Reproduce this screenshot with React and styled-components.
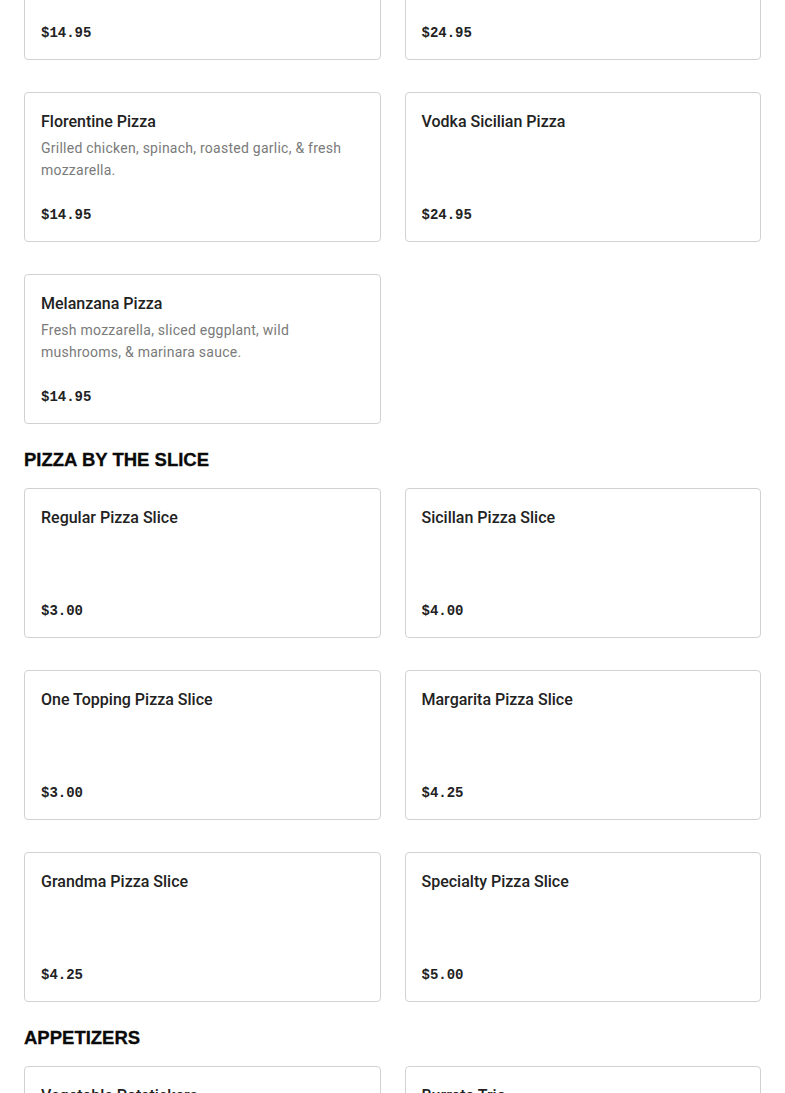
import React from "react";
import styled, { createGlobalStyle } from "styled-components";

const GlobalStyle = createGlobalStyle`
    html, body {
        margin: 0;
        padding: 0;
        background: #fff;
        overflow: hidden;
    }
    body {
        font-family: "Liberation Sans", Arial, sans-serif;
        color: #222;
    }
`

const Page = styled.div`
    width: 100%;
    padding: 0 24px;
    box-sizing: border-box;
    margin-top: -90px;
`

const Section = styled.section`
    display: flex;
    flex-direction: column;
`

const Heading = styled.h2`
    margin: 24px 0 16px 0;
    font-family: "Liberation Sans", Arial, sans-serif;
    font-size: 18.5px;
    line-height: 24px;
    font-weight: 900;
    color: #0a0a0a;
    -webkit-text-stroke: 0.3px #0a0a0a;
`

const Grid = styled.div`
    display: grid;
    grid-template-columns: 1fr 1fr;
    column-gap: 24px;
    row-gap: 32px;
`

const Card = styled.div`
    display: flex;
    flex-direction: column;
    height: 150px;
    box-sizing: border-box;
    padding: 17px 16px 14px 16px;
    border: 1px solid #d2d2d2;
    border-radius: 4px;
    background: #fff;
    .title{
        font-family: Roboto, "Liberation Sans", sans-serif;
        font-weight: 500;
        font-size: 16px;
        line-height: 24px;
        color: #222;
    }
    .desc{
        margin-top: 3px;
        font-family: Roboto, "Liberation Sans", sans-serif;
        font-size: 14px;
        letter-spacing: 0.25px;
        line-height: 22px;
        color: #7a7a7a;
        max-width: 305px;
    }
    .price{
        margin-top: auto;
        font-family: "Liberation Mono", "Courier New", monospace;
        font-weight: 700;
        font-size: 14px;
        line-height: 24px;
        color: #222;
    }
`

const menu = [
    {
        name: null,
        items: [
            { title: "Chicken Pesto Pizza", desc: "Grilled chicken, basil pesto, & fresh mozzarella.", price: "$14.95" },
            { title: "Grandma Sicilian Pizza", desc: "", price: "$24.95" },
            { title: "Florentine Pizza", desc: "Grilled chicken, spinach, roasted garlic, & fresh mozzarella.", price: "$14.95" },
            { title: "Vodka Sicilian Pizza", desc: "", price: "$24.95" },
            { title: "Melanzana Pizza", desc: "Fresh mozzarella, sliced eggplant, wild mushrooms, & marinara sauce.", price: "$14.95" },
        ],
    },
    {
        name: "PIZZA BY THE SLICE",
        items: [
            { title: "Regular Pizza Slice", price: "$3.00" },
            { title: "Sicillan Pizza Slice", price: "$4.00" },
            { title: "One Topping Pizza Slice", price: "$3.00" },
            { title: "Margarita Pizza Slice", price: "$4.25" },
            { title: "Grandma Pizza Slice", price: "$4.25" },
            { title: "Specialty Pizza Slice", price: "$5.00" },
        ],
    },
    {
        name: "APPETIZERS",
        items: [
            { title: "Vegetable Potstickers", price: "$6.95" },
            { title: "Burrata Trio", price: "$12.95" },
        ],
    },
];

const App = () => {
    return (
        <>
            <GlobalStyle />
            <Page>
                {menu.map((sec, i) => (
                    <Section key={i}>
                        {sec.name && <Heading>{sec.name}</Heading>}
                        <Grid>
                            {sec.items.map((it) => (
                                <Card key={it.title}>
                                    <div className="title">{it.title}</div>
                                    {it.desc && <div className="desc">{it.desc}</div>}
                                    <div className="price">{it.price}</div>
                                </Card>
                            ))}
                        </Grid>
                    </Section>
                ))}
            </Page>
        </>
    );
};

export default App;
